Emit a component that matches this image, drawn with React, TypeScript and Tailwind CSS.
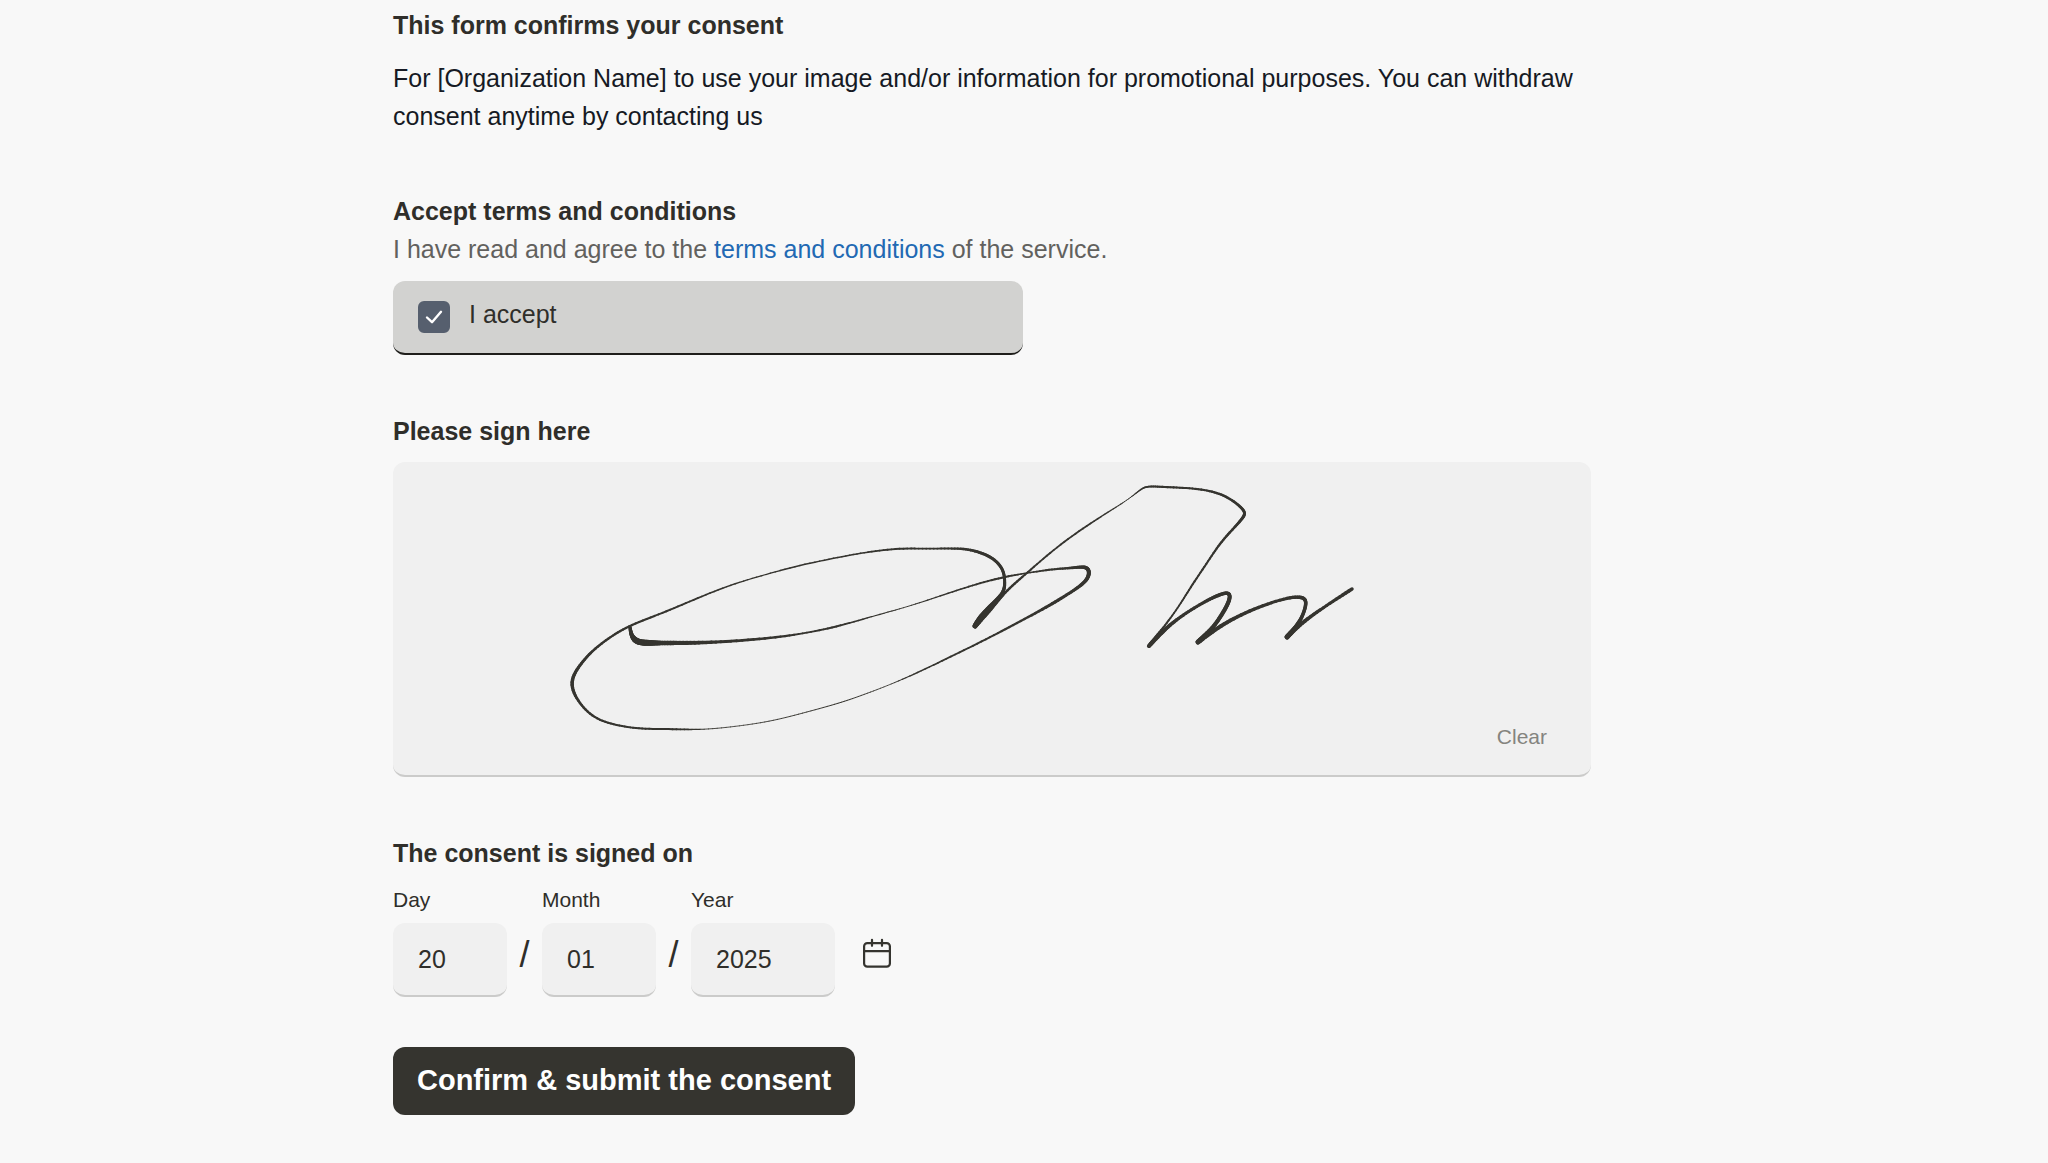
import { useState } from "react";

type Point = [x: number, y: number, width: number];

const strokes: Point[][] = [
  [
    [630, 627, 3], [631, 635, 4], [636, 642, 6], [647, 643, 6], [663, 643, 4.5], [690, 643, 4], [723, 642, 3],
    [773, 638, 2.5], [807, 633, 1.8], [840, 626, 2], [877, 615, 1.2], [907, 607, 0.9], [940, 596, 1.3],
    [973, 585, 1.8], [1003, 577, 2], [1027, 573, 1.6], [1053, 569, 2], [1073, 568, 2.5], [1087, 566, 3.5],
    [1090, 573, 4], [1086, 582, 3.5], [1070, 593, 3], [1047, 607, 3], [1017, 623, 2.2], [987, 639, 2],
    [950, 657, 1.8], [917, 673, 1.5], [887, 686, 0.8], [860, 696, 0.9], [840, 703, 1], [807, 712, 0.9],
    [773, 721, 0.9], [740, 726, 0.8], [703, 730, 0.9], [673, 729, 2], [640, 729, 2], [620, 726, 2], [596, 720, 2.2],
    [579, 704, 2.5], [568, 682, 3.5], [582, 662, 3], [593, 650, 2.5], [610, 637, 2.3], [630, 625, 2.2],
    [663, 613, 2], [693, 600, 1.8], [727, 586, 1.5], [760, 576, 1.2], [800, 565, 1.5], [840, 557, 1.5],
    [867, 552, 1.6], [900, 548, 2], [930, 549, 1.8], [960, 548, 2.3], [977, 551, 2.8], [994, 558, 3],
    [1004, 570, 3], [1005, 583, 3], [1004, 593, 3.5], [990, 607, 5], [980, 618, 5.5], [975, 626, 5],
  ],
  [
    [975, 626, 5], [990, 609, 5], [1007, 590, 2.5], [1027, 573, 2], [1053, 550, 1.8], [1083, 528, 1.8],
    [1113, 509, 1.3], [1129, 499, 0.9], [1141, 489, 1.3], [1147, 486, 1.8], [1163, 487, 2.2], [1190, 488, 2],
    [1213, 491, 2.2], [1230, 498, 2.5], [1246, 511, 2.8], [1244, 517, 3], [1233, 529, 2.5], [1220, 543, 2.3],
    [1207, 563, 2], [1190, 588, 2], [1178, 608, 1.7], [1163, 628, 2], [1149, 646, 4],
  ],
  [
    [1149, 646, 4], [1163, 631, 4], [1177, 619, 3.3], [1200, 604, 3], [1220, 594, 3.5], [1230, 592, 3.5],
    [1230, 600, 4], [1223, 613, 4], [1213, 628, 4], [1198, 642, 5],
  ],
  [
    [1198, 642, 5], [1217, 628, 4], [1243, 613, 3.5], [1283, 598, 3], [1304, 596, 3.5], [1307, 603, 3.5],
    [1302, 618, 3.5], [1295, 628, 4], [1287, 637, 5],
  ],
  [[1287, 637, 5], [1300, 624, 4], [1327, 605, 3], [1352, 589, 3.5]],
];

const STEPS = 8;

function spline(a: number, b: number, c: number, d: number, t: number) {
  const u = 1 - t;
  return (u * u * u * a + (3 * t * t * t - 6 * t * t + 4) * b + (3 * u * u * u - 6 * u * u + 4) * c + t * t * t * d) / 6;
}

function mirror(p: Point, q: Point): Point {
  return [2 * p[0] - q[0], 2 * p[1] - q[1], p[2]];
}

function smooth(points: Point[]): Point[] {
  const n = points.length;
  const ctrl = [mirror(points[0], points[1]), ...points, mirror(points[n - 1], points[n - 2])];
  const out: Point[] = [];
  for (let i = 0; i < n - 1; i++) {
    const [a, b, c, d] = ctrl.slice(i, i + 4);
    for (let s = 0; s < STEPS; s++) {
      const t = s / STEPS;
      out.push([spline(a[0], b[0], c[0], d[0], t), spline(a[1], b[1], c[1], d[1], t), b[2] + (c[2] - b[2]) * t]);
    }
  }
  out.push(points[n - 1]);
  return out;
}

function Signature() {
  return (
    <svg viewBox="393 462 1198 313" className="block h-auto w-full" role="img" aria-label="Signature">
      <g stroke="#35342f" strokeLinecap="round">
        {strokes.map((stroke, k) => {
          const pts = smooth(stroke);
          return pts.slice(1).map((p, i) => (
            <line key={`${k}-${i}`} x1={pts[i][0]} y1={pts[i][1]} x2={p[0]} y2={p[1]} strokeWidth={p[2]} />
          ));
        })}
      </g>
    </svg>
  );
}

function CalendarIcon() {
  return (
    <svg viewBox="0 0 28 30" className="h-[30px] w-7" fill="none" stroke="#35342f" strokeWidth="2.2" strokeLinecap="round" aria-hidden="true">
      <rect x="1.1" y="5.1" width="25.8" height="23.5" rx="3.2" />
      <path d="M1.1 13.2h25.8M9 1.8v6M19 1.8v6" />
    </svg>
  );
}

function Heading({ children }: { children: string }) {
  return <h2 className="text-[25px] leading-8 font-bold">{children}</h2>;
}

function DateField({ label, value, wide }: { label: string; value: string; wide?: boolean }) {
  return (
    <label className="flex flex-col gap-[9px]">
      <span className="text-[21px] leading-7">{label}</span>
      <input
        defaultValue={value}
        inputMode="numeric"
        className={`${wide ? "w-36" : "w-[114px]"} h-[74px] rounded-xl border-b-2 border-[#cbcbca] bg-[#f0f0f0] px-[25px] text-[25px] outline-none`}
      />
    </label>
  );
}

function Slash() {
  return <span className="w-[35px] pb-[22px] text-center text-[36px] leading-10" aria-hidden="true">/</span>;
}

export default function App() {
  const [signed, setSigned] = useState(true);
  return (
    <main className="min-h-screen bg-[#f8f8f8] font-['Liberation_Sans',Arial,sans-serif] text-[#2f2e2a]">
      <form className="mx-auto max-w-[1262px] pt-[9px] pb-10" onSubmit={(e) => e.preventDefault()}>
        <div className="flex max-w-[1198px] flex-col gap-[60px]">
          <section className="flex flex-col gap-[18px]">
            <Heading>This form confirms your consent</Heading>
            <p className="text-[25px] leading-[38px] text-[#161a24]">
              For [Organization Name] to use your image and/or information for promotional purposes. You can withdraw
              consent anytime by contacting us
            </p>
          </section>

          <section>
            <Heading>Accept terms and conditions</Heading>
            <p className="mt-[3px] text-[25px] leading-[38px] text-[#62615e]">
              I have read and agree to the <a href="#terms" className="text-[#2269b3]">terms and conditions</a> of the
              service.
            </p>
            <label className="mt-[13px] flex h-[74px] max-w-[630px] items-center gap-[19px] rounded-xl border-b-2 border-[#1f1e1b] bg-[#d2d2d0] px-[25px]">
              <span className="grid size-8 place-items-center">
                <input
                  type="checkbox"
                  defaultChecked
                  className="peer col-start-1 row-start-1 size-8 appearance-none rounded-md border-2 border-[#565f6e] checked:bg-[#565f6e]"
                />
                <svg viewBox="0 0 18 16" className="pointer-events-none invisible col-start-1 row-start-1 h-4 w-[18px] peer-checked:visible" fill="none" stroke="white" strokeWidth="2.4" strokeLinecap="round" strokeLinejoin="round" aria-hidden="true">
                  <path d="M2 8.5 7 13.2 16 2.8" />
                </svg>
              </span>
              <span className="pb-1.5 text-[25px] leading-8">I accept</span>
            </label>
          </section>

          <section>
            <Heading>Please sign here</Heading>
            <div className="relative mt-[15px] min-h-[315px] rounded-xl border-b-2 border-[#cbcbca] bg-[#f0f0f0]">
              {signed && <Signature />}
              <button type="button" onClick={() => setSigned(false)} className="absolute right-11 bottom-6 text-[21px] leading-7 text-[#84847f]">
                Clear
              </button>
            </div>
          </section>

          <fieldset>
            <legend className="text-[25px] leading-8 font-bold">The consent is signed on</legend>
            <div className="mt-[17px] flex items-end">
              <DateField label="Day" value="20" />
              <Slash />
              <DateField label="Month" value="01" />
              <Slash />
              <DateField label="Year" value="2025" wide />
              <button type="button" aria-label="Choose date" className="mb-[29px] ml-7">
                <CalendarIcon />
              </button>
            </div>
          </fieldset>
        </div>
        <button type="submit" className="mt-[50px] h-[68px] rounded-xl bg-[#35342f] px-6 text-[29px] font-bold text-white">
          Confirm &amp; submit the consent
        </button>
      </form>
    </main>
  );
}
